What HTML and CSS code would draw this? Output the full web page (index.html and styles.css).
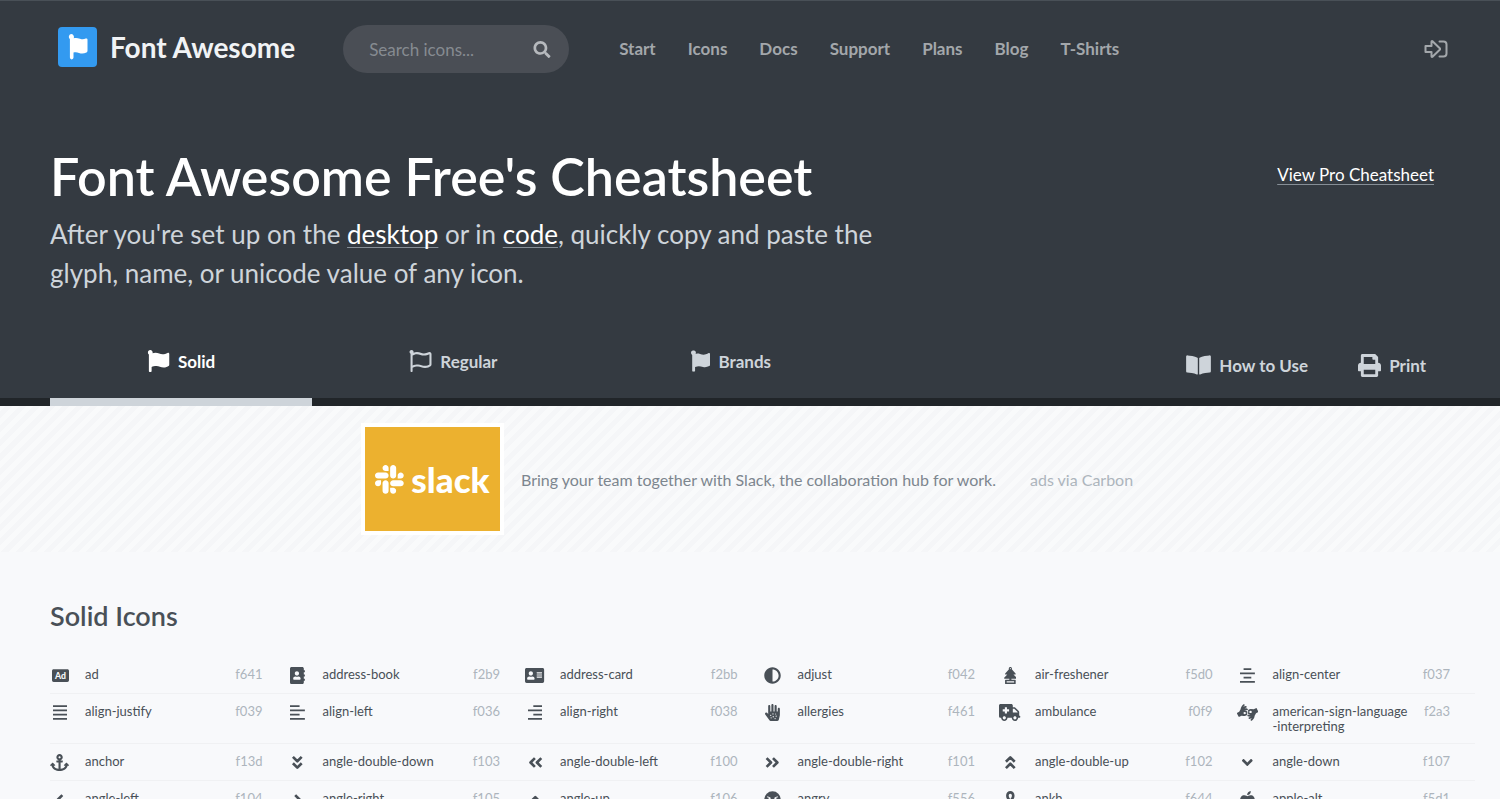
FILE: index.html
```html
<!DOCTYPE html>
<html lang="en">
<head>
<meta charset="utf-8">
<title>Font Awesome Free's Cheatsheet</title>
<link rel="stylesheet" href="styles.css">
</head>
<body>
<svg class="sprite" aria-hidden="true">
  <symbol id="flag" viewBox="0 0 512 512"><path d="M349.565 98.783C295.978 98.783 251.721 64 184.348 64c-24.955 0-47.309 4.384-68.045 12.013a55.947 55.947 0 0 0 3.586-23.562C118.117 24.015 94.806 1.206 66.338.048 34.345-1.254 8 24.296 8 56c0 19.026 9.497 35.825 24 45.945V488c0 13.255 10.745 24 24 24h16c13.255 0 24-10.745 24-24v-94.4c28.311-12.064 63.582-22.122 114.435-22.122 53.588 0 97.844 34.783 165.217 34.783 48.169 0 86.667-16.294 122.505-40.858C506.84 359.452 512 349.571 512 339.045v-243.1c0-23.393-24.269-38.87-45.485-29.016-34.338 15.948-76.454 31.854-116.95 31.854z"/></symbol>
  <symbol id="fa-flag" viewBox="0 0 448 512"><path d="M88 92c40-16 84-16 126-2 50 17 92 22 136 8 26-8 46-22 66-30 16-6 32 4 32 22v258c0 14-6 22-18 28-44 22-92 36-146 22-66-17-112-28-188 2v84c0 16-12 28-28 28h-12c-16 0-28-12-28-28V112C10 100 0 82 0 60 0 26 26 0 58 0s58 26 58 58c0 14-6 26-12 34z"/></symbol>
</svg>
<div class="page">
  <div class="hero">
    <header class="topbar">
      <a class="brand" href="#">
        <span class="brand-mark"><svg viewBox="0 0 20 26"><path d="M3 0a3 3 0 0 1 2.700 4.300c2.300-.7 4-.3 6.300.5 2.400.9 4 .6 5.700-.2.900-.4 1.800 0 1.800 1v11.200c0 .8-.3 1.300-1 1.600-2.600 1.300-5 1.300-7.500.5-2-.7-3.800-.7-5.500-.3v5a1.600 1.600 0 0 1-3.600 0V5.200A3 3 0 0 1 3 0z"/></svg></span>
        <span>Font Awesome</span>
      </a>
      <form class="search" role="search">
        <input type="search" placeholder="Search icons..." aria-label="Search icons">
        <button type="submit" aria-label="Search"><svg viewBox="0 0 512 512"><path d="M505 442.700L405.300 343c-4.500-4.500-10.600-7-17-7H372c27.600-35.300 44-79.700 44-128C416 93.100 322.900 0 208 0S0 93.100 0 208s93.100 208 208 208c48.300 0 92.700-16.400 128-44v16.300c0 6.400 2.500 12.500 7 17l99.700 99.700c9.400 9.400 24.600 9.400 33.900 0l28.300-28.300c9.400-9.400 9.400-24.600.1-34zM208 336c-70.700 0-128-57.200-128-128 0-70.700 57.200-128 128-128 70.700 0 128 57.200 128 128 0 70.700-57.200 128-128 128z"/></svg></button>
      </form>
      <nav class="mainnav" aria-label="Main">
        <a href="#">Start</a><a href="#">Icons</a><a href="#">Docs</a><a href="#">Support</a><a href="#">Plans</a><a href="#">Blog</a><a href="#">T-Shirts</a>
      </nav>
      <a class="signin" href="#" aria-label="Sign in"><svg viewBox="0 0 24 18"><path d="M1.500 6h6V1.800c0-.6.6-.9 1-.5L16 8.500v1L8.500 16.700c-.4.4-1 .1-1-.5V12h-6z"/><path d="M15.500 1.500h4a3 3 0 0 1 3 3v9a3 3 0 0 1-3 3h-4"/></svg></a>
    </header>
    <div class="intro">
      <div class="intro-text">
        <h1>Font Awesome Free's Cheatsheet</h1>
        <p>After you're set up on the <a href="#">desktop</a> or in <a href="#">code</a>, quickly copy and paste the glyph, name, or unicode value of any icon.</p>
      </div>
      <a class="pro-link" href="#">View Pro Cheatsheet</a>
    </div>
    <div class="toolbar">
      <nav class="tabs" aria-label="Styles">
        <a class="tab tab-active" href="#"><svg class="flag-icon" viewBox="0 0 512 512"><use href="#flag"/></svg>Solid</a>
        <a class="tab" href="#"><svg class="flag-icon" viewBox="0 0 512 512"><path d="M336.174 80c-49.132 0-93.305-32-161.913-32-31.301 0-58.303 6.482-80.721 15.168a48.040 48.040 0 0 0 2.142-20.727C93.067 19.575 74.167 1.594 51.201.104 23.242-1.710 0 20.431 0 48c0 17.764 9.657 33.262 24 41.562V496c0 8.837 7.163 16 16 16h16c8.837 0 16-7.163 16-16v-83.443C109.869 395.280 143.259 384 199.826 384c49.132 0 93.305 32 161.913 32 58.479 0 101.972-22.617 128.548-39.981C503.846 367.161 512 352.051 512 335.855V95.937c0-34.459-35.264-57.768-66.904-44.117C409.193 67.309 371.641 80 336.174 80zM464 336c-21.783 15.412-60.824 32-102.261 32-59.945 0-102.002-32-161.913-32-43.361 0-96.379 9.403-127.826 24V128c21.784-15.412 60.824-32 102.261-32 59.945 0 102.002 32 161.913 32 43.271 0 96.320-17.366 127.826-32v240z"/></svg>Regular</a>
        <a class="tab" href="#"><svg class="brand-icon" viewBox="0 0 448 512"><use href="#fa-flag"/></svg>Brands</a>
      </nav>
      <div class="actions">
        <a href="#"><svg class="book-icon" viewBox="0 0 576 512"><path d="M542.220 32.050c-54.800 3.110-163.720 14.430-230.960 55.590-4.640 2.840-7.270 7.890-7.270 13.170v363.870c0 11.550 12.630 18.850 23.280 13.490 69.180-34.820 169.230-44.320 218.700-46.920 16.890-.89 30.020-14.430 30.020-30.660V62.750c.01-17.710-15.350-31.740-33.770-30.700zM264.730 87.640C197.500 46.480 88.580 35.170 33.780 32.050 15.360 31.010 0 45.040 0 62.750V400.600c0 16.240 13.130 29.780 30.020 30.660 49.490 2.600 149.590 12.110 218.770 46.950 10.620 5.350 23.210-1.940 23.210-13.460V100.630c0-5.290-2.620-10.140-7.270-12.990z"/></svg>How to Use</a>
        <a href="#"><svg class="print-icon" viewBox="0 0 512 512"><path fill-rule="evenodd" d="M448 192V77.250c0-8.490-3.370-16.620-9.370-22.630L393.370 9.370c-6-6-14.140-9.370-22.630-9.370H96C78.330 0 64 14.330 64 32v160c-35.350 0-64 28.650-64 64v112c0 8.840 7.160 16 16 16h48v96c0 17.670 14.330 32 32 32h320c17.670 0 32-14.330 32-32v-96h48c8.840 0 16-7.160 16-16V256c0-35.350-28.650-64-64-64zm-64 256H128v-96h256v96zm0-224H128V64h192v48c0 8.840 7.160 16 16 16h48v96z"/></svg>Print</a>
      </div>
    </div>
  </div>

  <aside class="ad">
    <a class="ad-image" href="#" aria-label="Slack">
      <svg viewBox="0 0 124 124"><g id="petal"><path d="M25.800 77.600c0 7.100-5.800 12.900-12.900 12.900S0 84.700 0 77.600s5.800-12.900 12.900-12.900h12.900zM32.300 77.600c0-7.100 5.800-12.900 12.900-12.900s12.900 5.800 12.900 12.900v32.300c0 7.100-5.800 12.900-12.900 12.900s-12.900-5.800-12.900-12.900z"/></g><use href="#petal" transform="rotate(90 61.400 61.400)"/><use href="#petal" transform="rotate(180 61.400 61.400)"/><use href="#petal" transform="rotate(270 61.400 61.400)"/></svg>
      <span>slack</span>
    </a>
    <a class="ad-text" href="#">Bring your team together with Slack, the collaboration hub for work.</a>
    <a class="ad-via" href="#">ads via Carbon</a>
  </aside>

  <main class="icons">
    <h2>Solid Icons</h2>
    <ul class="icon-grid">
      <li><svg viewBox="0 0 512 512" class="glyph"><path d="M464 64H48C21.500 64 0 85.500 0 112v288c0 26.500 21.500 48 48 48h416c26.500 0 48-21.500 48-48V112c0-26.500-21.500-48-48-48z"/><text class="ad-glyph" x="256" y="348">Ad</text></svg><span class="name">ad</span><span class="code">f641</span></li>
      <li><svg viewBox="0 0 448 512" class="glyph"><path d="M436 160c6.600 0 12-5.400 12-12v-40c0-6.600-5.400-12-12-12h-20V48c0-26.500-21.500-48-48-48H48C21.500 0 0 21.500 0 48v416c0 26.500 21.500 48 48 48h320c26.500 0 48-21.500 48-48v-48h20c6.600 0 12-5.400 12-12v-40c0-6.600-5.400-12-12-12h-20v-64h20c6.600 0 12-5.400 12-12v-40c0-6.600-5.400-12-12-12h-20v-64h20zm-228-32c35.300 0 64 28.700 64 64s-28.700 64-64 64-64-28.700-64-64 28.700-64 64-64zm112 236.800c0 10.600-10 19.200-22.400 19.200H118.400C106 384 96 375.400 96 364.800v-19.200c0-31.800 30.100-57.600 67.200-57.600h5c12.300 5.100 25.700 8 39.800 8s27.600-2.900 39.800-8h5c37.100 0 67.200 25.800 67.200 57.600v19.200z"/></svg><span class="name">address-book</span><span class="code">f2b9</span></li>
      <li><svg viewBox="0 0 576 512" class="glyph"><path d="M528 32H48C21.500 32 0 53.500 0 80v352c0 26.500 21.500 48 48 48h480c26.500 0 48-21.500 48-48V80c0-26.500-21.500-48-48-48zm-352 96c35.300 0 64 28.700 64 64s-28.700 64-64 64-64-28.700-64-64 28.700-64 64-64zm112 236.800c0 10.600-10 19.200-22.400 19.200H86.400C74 384 64 375.400 64 364.800v-19.200c0-31.800 30.100-57.600 67.200-57.600h5c12.300 5.100 25.700 8 39.800 8s27.600-2.900 39.800-8h5c37.100 0 67.200 25.800 67.200 57.600v19.200zM512 312c0 4.400-3.600 8-8 8H360c-4.400 0-8-3.600-8-8v-16c0-4.400 3.600-8 8-8h144c4.400 0 8 3.600 8 8v16zm0-64c0 4.400-3.600 8-8 8H360c-4.400 0-8-3.600-8-8v-16c0-4.400 3.600-8 8-8h144c4.400 0 8 3.600 8 8v16zm0-64c0 4.400-3.600 8-8 8H360c-4.400 0-8-3.600-8-8v-16c0-4.400 3.600-8 8-8h144c4.400 0 8 3.600 8 8v16z"/></svg><span class="name">address-card</span><span class="code">f2bb</span></li>
      <li><svg viewBox="0 0 512 512" class="glyph"><path d="M8 256c0 136.966 111.033 248 248 248s248-111.034 248-248S392.966 8 256 8 8 119.033 8 256zm248 184V72c101.705 0 184 82.311 184 184 0 101.705-82.311 184-184 184z"/></svg><span class="name">adjust</span><span class="code">f042</span></li>
      <li><svg viewBox="0 0 384 512" class="glyph"><path fill-rule="evenodd" d="M378.940 321.410L284.700 224h49.220c15.300 0 23.660-16.600 13.860-27.530L234.450 69.960c3.430-6.610 5.550-14 5.550-21.960 0-26.510-21.490-48-48-48s-48 21.490-48 48c0 7.960 2.120 15.350 5.550 21.960L36.220 196.470C26.420 207.400 34.780 224 50.080 224H99.300L5.060 321.410C-6.690 333.560 3.340 352 21.700 352H160v32H48c-8.840 0-16 7.160-16 16v96c0 8.840 7.160 16 16 16h288c8.840 0 16-7.160 16-16v-96c0-8.840-7.160-16-16-16H224v-32h138.300c18.360 0 28.390-18.440 16.640-30.590zM192 31.980c8.850 0 16.020 7.170 16.020 16.020 0 8.840-7.170 16.020-16.020 16.020S175.980 56.840 175.980 48c0-8.850 7.170-16.020 16.020-16.020zM304 432v32H80v-32h224z"/></svg><span class="name">air-freshener</span><span class="code">f5d0</span></li>
      <li><svg viewBox="0 0 448 512" class="glyph"><path d="M108 34h232v56H108zM0 162h448v56H0zM108 290h232v56H108zM0 418h448v56H0z"/></svg><span class="name">align-center</span><span class="code">f037</span></li>

      <li><svg viewBox="0 0 448 512" class="glyph"><path d="M0 34h448v56H0zM0 162h448v56H0zM0 290h448v56H0zM0 418h448v56H0z"/></svg><span class="name">align-justify</span><span class="code">f039</span></li>
      <li><svg viewBox="0 0 448 512" class="glyph"><path d="M0 34h288v56H0zM0 162h448v56H0zM0 290h288v56H0zM0 418h448v56H0z"/></svg><span class="name">align-left</span><span class="code">f036</span></li>
      <li><svg viewBox="0 0 448 512" class="glyph"><path d="M160 34h288v56H160zM0 162h448v56H0zM160 290h288v56H160zM0 418h448v56H0z"/></svg><span class="name">align-right</span><span class="code">f038</span></li>
      <li><svg viewBox="0 0 448 512" class="glyph"><path d="M416 112c-17.600 0-32 14.400-32 32v72c0 4.400-3.600 8-8 8h-16c-4.400 0-8-3.600-8-8V64c0-17.600-14.400-32-32-32s-32 14.400-32 32v152c0 4.400-3.600 8-8 8h-16c-4.400 0-8-3.600-8-8V32c0-17.600-14.400-32-32-32s-32 14.400-32 32v184c0 4.400-3.600 8-8 8h-16c-4.400 0-8-3.600-8-8V64c0-17.600-14.400-32-32-32S96 46.400 96 64v241l-23.600-32.500c-13-17.900-38-21.800-55.900-8.800s-21.800 38-8.800 55.900l125.600 172.700c9 12.400 23.500 19.800 38.800 19.800h197.600c22.300 0 41.600-15.300 46.700-37l26.500-112.700c3.200-13.700 4.900-28.300 5.100-42.300V144c0-17.600-14.400-32-32-32z"/><g class="cut"><circle cx="184" cy="416" r="18"/><circle cx="172" cy="340" r="20"/><circle cx="240" cy="300" r="18"/><circle cx="248" cy="384" r="20"/><circle cx="320" cy="300" r="16"/><circle cx="336" cy="368" r="18"/><circle cx="304" cy="440" r="18"/></g></svg><span class="name">allergies</span><span class="code">f461</span></li>
      <li><svg viewBox="0 0 640 512" class="glyph"><path fill-rule="evenodd" d="M624 352h-16V243.900c0-12.700-5.100-24.900-14.100-33.900L494 110.100c-9-9-21.200-14.100-33.900-14.100H416V48c0-26.500-21.500-48-48-48H48C21.500 0 0 21.500 0 48v320c0 26.500 21.500 48 48 48h16c0 53 43 96 96 96s96-43 96-96h128c0 53 43 96 96 96s96-43 96-96h48c8.800 0 16-7.200 16-16v-32c0-8.800-7.200-16-16-16zM160 464c-26.500 0-48-21.500-48-48s21.500-48 48-48 48 21.500 48 48-21.500 48-48 48zm144-248c0 4.400-3.600 8-8 8h-56v56c0 4.400-3.600 8-8 8h-48c-4.400 0-8-3.600-8-8v-56h-56c-4.400 0-8-3.600-8-8v-48c0-4.400 3.600-8 8-8h56v-56c0-4.400 3.600-8 8-8h48c4.400 0 8 3.600 8 8v56h56c4.400 0 8 3.600 8 8v48zm176 248c-26.500 0-48-21.500-48-48s21.500-48 48-48 48 21.500 48 48-21.500 48-48 48zm80-208H416V144h44.100l99.900 99.900V256z"/></svg><span class="name">ambulance</span><span class="code">f0f9</span></li>
      <li><svg viewBox="0 0 640 512" class="glyph"><path fill-rule="evenodd" d="M290.547 189.039c-20.295-10.149-44.147-11.199-64.739-3.890 42.606 0 71.208 20.475 85.578 50.576 8.576 17.899-5.148 38.071-23.617 38.071 18.429 0 32.211 20.136 23.617 38.071-14.725 30.846-46.123 50.854-80.298 50.854-.557 0-94.471-8.615-94.471-8.615l-66.406 33.347c-9.384 4.693-19.815.379-23.895-7.781L1.860 290.747c-4.167-8.615-1.111-18.897 6.946-23.621l58.072-33.069L108 159.861c6.390-57.245 34.731-109.767 79.743-146.726 11.391-9.448 28.341-7.781 37.510 3.613 9.446 11.394 7.780 28.067-3.612 37.516-12.503 10.559-23.618 22.509-32.509 35.570 21.672-14.729 46.679-24.732 74.186-28.067 14.725-1.945 28.063 8.336 29.730 23.065 1.945 14.728-8.336 28.067-23.062 29.734-16.116 1.945-31.120 7.503-44.178 15.284 26.114-5.713 58.712-3.138 88.079 11.115 13.336 6.669 18.893 22.509 12.224 35.848-6.389 13.060-22.504 18.617-35.564 12.226zm-27.229 69.472c-6.112-12.505-18.338-20.286-32.231-20.286a35.460 35.460 0 0 0-35.565 35.570c0 21.428 17.808 35.570 35.565 35.570 13.893 0 26.119-7.781 32.231-20.286 4.446-9.449 13.614-15.006 23.339-15.284-9.725-.277-18.893-5.835-23.339-15.284zm374.821-37.237c4.168 8.615 1.111 18.897-6.946 23.621l-58.071 33.069L532 352.160c-6.390 57.245-34.731 109.767-79.743 146.726-10.932 9.112-27.799 8.144-37.510-3.613-9.446-11.394-7.780-28.067 3.613-37.516 12.503-10.559 23.617-22.509 32.508-35.570-21.672 14.729-46.679 24.732-74.186 28.067-10.021 2.506-27.552-5.643-29.730-23.065-1.945-14.728 8.336-28.067 23.062-29.734 16.116-1.946 31.120-7.503 44.178-15.284-26.114 5.713-58.712 3.138-88.079-11.115-13.336-6.669-18.893-22.509-12.224-35.848 6.389-13.061 22.505-18.619 35.565-12.227 20.295 10.149 44.147 11.199 64.739 3.890-42.606 0-71.208-20.475-85.578-50.576-8.576-17.899 5.148-38.071 23.617-38.071-18.429 0-32.211-20.136-23.617-38.071 14.033-29.396 44.039-50.887 81.966-50.854l92.803 8.615 66.406-33.347c9.408-4.704 19.828-.354 23.894 7.781l44.455 88.926zm-229.227-18.618c-13.893 0-26.119 7.781-32.231 20.286-4.446 9.449-13.614 15.006-23.339 15.284 9.725.278 18.893 5.836 23.339 15.284 6.112 12.505 18.338 20.286 32.231 20.286a35.460 35.460 0 0 0 35.565-35.570c0-21.429-17.808-35.570-35.565-35.570z"/></svg><span class="name">american-sign-language<br>-interpreting</span><span class="code">f2a3</span></li>

      <li><svg viewBox="0 0 576 512" class="glyph"><path d="M12.971 352h32.394C67.172 454.735 181.944 512 288 512c106.229 0 220.853-57.380 242.635-160h32.394c10.691 0 16.045-12.926 8.485-20.485l-67.029-67.029c-4.686-4.686-12.284-4.686-16.971 0l-67.029 67.029c-7.560 7.560-2.206 20.485 8.485 20.485h35.146c-20.290 54.317-84.963 86.588-144.117 94.015V256h52c6.627 0 12-5.373 12-12v-40c0-6.627-5.373-12-12-12h-52v-5.470c37.281-13.226 63.999-48.758 64-90.524C384.005 43.772 341.605.738 289.370.01 235.723-.739 192 42.525 192 96c0 41.793 26.746 77.351 64 90.530V192h-52c-6.627 0-12 5.373-12 12v40c0 6.627 5.373 12 12 12h52v190.015c-58.936-7.399-123.820-39.679-144.117-94.015h35.146c10.691 0 16.045-12.926 8.485-20.485l-67.029-67.029c-4.686-4.686-12.284-4.686-16.971 0L4.485 331.515C-3.074 339.074 2.280 352 12.971 352zM288 64c17.645 0 32 14.355 32 32s-14.355 32-32 32-32-14.355-32-32 14.355-32 32-32z"/></svg><span class="name">anchor</span><span class="code">f13d</span></li>
      <li><svg viewBox="0 0 320 512" class="glyph chevron"><path d="M28 88l132 132L292 88M28 280l132 132 132-132"/></svg><span class="name">angle-double-down</span><span class="code">f103</span></li>
      <li><svg viewBox="0 0 448 512" class="glyph chevron"><path d="M208 124L76 256l132 132M400 124L268 256l132 132"/></svg><span class="name">angle-double-left</span><span class="code">f100</span></li>
      <li><svg viewBox="0 0 448 512" class="glyph chevron"><path d="M48 124l132 132L48 388M240 124l132 132-132 132"/></svg><span class="name">angle-double-right</span><span class="code">f101</span></li>
      <li><svg viewBox="0 0 320 512" class="glyph chevron"><path d="M28 232l132-132 132 132M28 424l132-132 132 132"/></svg><span class="name">angle-double-up</span><span class="code">f102</span></li>
      <li><svg viewBox="0 0 320 512" class="glyph"><path d="M143 352.300L7 216.300c-9.400-9.400-9.400-24.600 0-33.900l22.600-22.600c9.400-9.400 24.600-9.400 33.900 0l96.400 96.400 96.400-96.400c9.400-9.400 24.600-9.400 33.900 0l22.600 22.600c9.400 9.400 9.400 24.600 0 33.900l-136 136c-9.200 9.400-24.400 9.400-33.800 0z"/></svg><span class="name">angle-down</span><span class="code">f107</span></li>

      <li><svg viewBox="0 0 256 512" class="glyph chevron"><path d="M190 126L60 256l130 130"/></svg><span class="name">angle-left</span><span class="code">f104</span></li>
      <li><svg viewBox="0 0 256 512" class="glyph chevron"><path d="M66 126l130 130L66 386"/></svg><span class="name">angle-right</span><span class="code">f105</span></li>
      <li><svg viewBox="0 0 320 512" class="glyph chevron"><path d="M28 318l132-132 132 132"/></svg><span class="name">angle-up</span><span class="code">f106</span></li>
      <li><svg viewBox="0 0 512 512" class="glyph"><circle cx="256" cy="256" r="248"/><g class="cut"><circle cx="168" cy="240" r="34"/><circle cx="344" cy="240" r="34"/><path d="M170 390c40-56 132-56 172 0l-20 18c-34-40-98-40-132 0z"/><path d="M100 160l96 36-8 26-96-32zM412 160l-96 36 8 26 96-32z"/></g></svg><span class="name">angry</span><span class="code">f556</span></li>
      <li><svg viewBox="0 0 320 512" class="glyph"><path fill-rule="evenodd" d="M296 256h-44.600C272.500 222 288 181.600 288 144 288 55.600 230.700 0 160 0S32 55.600 32 144c0 37.600 15.500 78 36.600 112H24c-13.300 0-24 10.700-24 24v32c0 13.300 10.700 24 24 24h96v152c0 13.300 10.700 24 24 24h32c13.300 0 24-10.700 24-24V336h96c13.300 0 24-10.700 24-24v-32c0-13.300-10.700-24-24-24zM160 80c29.600 0 48 24.500 48 64 0 34.600-27.100 78.100-48 100.900-20.900-22.800-48-66.300-48-100.900 0-39.500 18.400-64 48-64z"/></svg><span class="name">ankh</span><span class="code">f644</span></li>
      <li><svg viewBox="0 0 448 512" class="glyph"><path d="M350.850 129c25.970 4.670 47.270 18.670 63.920 42 14.650 20.670 24.640 46.670 29.960 78 4.670 28.670 4.320 57.330-1 86-7.990 47.330-23.970 87-47.940 119-28.640 38.670-64.590 58-107.870 58-10.660 0-22.300-3.330-34.960-10-8.660-5.330-18.310-8-28.970-8s-20.300 2.670-28.970 8c-12.660 6.670-24.300 10-34.960 10-43.280 0-79.230-19.330-107.870-58-23.970-32-39.950-71.670-47.940-119-5.320-28.670-5.670-57.330-1-86 5.320-31.330 15.310-57.330 29.960-78 16.650-23.330 37.950-37.330 63.920-42 15.980-2.670 37.950-.33 65.920 7 23.970 6.670 44.280 14.670 60.930 24 16.650-9.330 36.960-17.330 60.930-24 27.970-7.330 49.960-9.670 65.940-7zM295.820 92c-18.820 18.800-50.190 30.700-79.620 30.800-2.200-31.800 8.200-63.500 29.600-86.200C264.500 17.700 292.400 2.500 323.300 0c2.600 33.600-6.200 70.600-27.480 92z"/></svg><span class="name">apple-alt</span><span class="code">f5d1</span></li>
    </ul>
  </main>
</div>
</body>
</html>
```
FILE: styles.css
```css
* { box-sizing: border-box; }
body { margin: 0; background: #f8f9fb; color: #495057; font-family: Lato, "Open Sans", sans-serif; }
a { color: inherit; text-decoration: none; }
svg { fill: currentColor; flex: none; }
.sprite { display: none; }
.page { height: 100vh; overflow: hidden; }

.hero { background: #343a41; color: #ced4da; border-top: 1px solid #495057; }
.topbar { display: flex; align-items: center; padding: 24px 52px 0 58px; }
.brand { display: flex; align-items: center; gap: 13px; margin: 0 48px 4px 0; color: #f1f3f5; font-size: 28px; font-weight: 700; line-height: 40px; }
.brand-mark { display: grid; place-items: center; width: 39px; height: 40px; border-radius: 4px; background: #339af0; color: #fff; }
.brand-mark svg { width: 20px; height: 26px; }
.search { display: flex; align-items: center; width: 226px; height: 48px; padding: 0 18px 0 26px; border-radius: 24px; background: #4a4e55; }
.search input { flex: 1; min-width: 0; padding: 0; border: 0; outline: 0; background: none; color: #ced4da; font: 17px Lato, sans-serif; }
.search input::placeholder { color: #868b91; opacity: 1; }
.search button { display: flex; padding: 0; border: 0; background: none; color: #b6b9bd; }
.search svg { width: 18px; height: 17px; }
.mainnav { display: flex; gap: 32px; margin-left: 50px; padding-bottom: 2px; color: #a3a7ab; font-size: 17px; font-weight: 700; }
.signin { margin-left: auto; color: #a3a7ab; }
.signin svg { display: block; width: 24px; height: 18px; fill: none; stroke: currentColor; stroke-width: 2; stroke-linejoin: round; stroke-linecap: round; }

.intro { display: flex; justify-content: space-between; padding: 72px 66px 0 50px; }
.intro-text { max-width: 860px; }
h1 { margin: 0; color: #fff; font-size: 52px; font-weight: 600; line-height: 62px; }
.intro p { margin: 8px 0 0; font-size: 26px; line-height: 39px; }
.intro a { color: #fff; text-decoration: underline 1px #868e96; text-underline-offset: 3px; text-decoration-skip-ink: none; }
.intro .pro-link { align-self: flex-start; margin-top: 20px; font-size: 17px; line-height: 20px; }

.toolbar { display: flex; justify-content: space-between; margin-top: 31px; padding: 0 74px 0 50px; border-bottom: 8px solid #212529; font-size: 17px; font-weight: 700; }
.tabs { display: flex; margin-bottom: -8px; }
.tab { display: flex; align-items: center; gap: 8px; height: 82px; padding: 0 97px; border-bottom: 8px solid transparent; }
.tab-active { color: #fff; border-color: #ced4da; }
.flag-icon { width: 23px; height: 22px; }
.brand-icon { width: 19px; height: 22px; }
.actions { display: flex; gap: 50px; height: 74px; padding-top: 8px; }
.actions a { display: flex; align-items: center; gap: 8px; }
.book-icon { width: 25px; height: 22px; }
.print-icon { width: 23px; height: 23px; }

.ad { display: flex; align-items: center; justify-content: center; height: 146px; font-size: 16px; color: #7d868f; background: repeating-linear-gradient(-45deg, #f9fafb 0 5px, #f5f6f8 5px 10px); }
.ad-image { display: flex; align-items: center; justify-content: center; gap: 7px; width: 143px; height: 112px; margin-right: 17px; border: 4px solid #fff; background: #ecb12f; color: #fff; font-size: 35px; font-weight: 900; line-height: 40px; }
.ad-image svg { width: 29px; height: 29px; }
.ad-text { flex: 0 0 509px; }
.ad-via { min-width: 109px; color: #adb5bd; }

.icons { padding: 48px 25px 0 50px; }
h2 { margin: 0; font-size: 27px; font-weight: 600; line-height: 32px; }
.icon-grid { display: grid; grid-template-columns: repeat(6, 1fr); margin: 25px 0 0; padding: 0; list-style: none; font-size: 13px; line-height: 15px; }
.icon-grid li { display: grid; grid-template-columns: 20px 1fr auto; column-gap: 15px; align-items: start; min-height: 37px; padding: 10px 25px 9px 0; border-bottom: 1px solid #f0f1f3; }
.glyph { justify-self: center; height: 17px; color: #495057; }
.code { color: #adb5bd; }
.chevron { fill: none; stroke: currentColor; stroke-width: 80; stroke-linejoin: round; overflow: visible; }
.cut { fill: #f8f9fb; }
.ad-glyph { fill: #f8f9fb; font-size: 260px; font-weight: 900; text-anchor: middle; }
```
